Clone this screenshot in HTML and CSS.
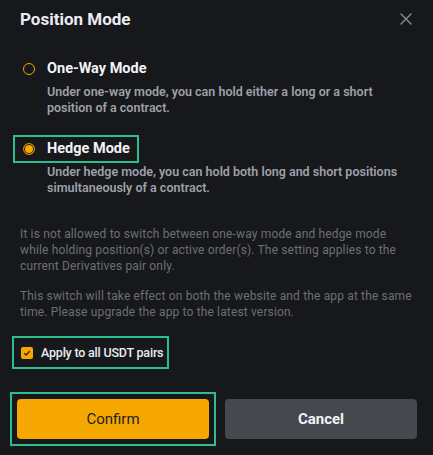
FILE: index.html
```html
<!DOCTYPE html>
<html lang="en">
<head>
  <meta charset="UTF-8">
  <meta name="viewport" content="width=device-width, initial-scale=1.0">
  <title>Position Mode</title>
  <link rel="stylesheet" href="styles.css">
</head>
<body>
  <div class="dialog">
    <div class="dialog-header">
      <h1>Position Mode</h1>
      <button class="close-button" aria-label="Close">
        <svg width="12" height="12" viewBox="0 0 12 12">
          <path d="M1 1 L11 11 M11 1 L1 11" stroke="#8a8d93" stroke-width="1.4" stroke-linecap="round" fill="none"/>
        </svg>
      </button>
    </div>

    <div class="options">
      <div class="option">
        <label class="option-head">
          <span class="radio"></span>
          <span class="option-title">One-Way Mode</span>
        </label>
        <p class="option-desc">Under one-way mode, you can hold either a long or a short position of a contract.</p>
      </div>
      <div class="option">
        <label class="option-head marked">
          <span class="radio checked"></span>
          <span class="option-title">Hedge Mode</span>
        </label>
        <p class="option-desc">Under hedge mode, you can hold both long and short positions simultaneously of a contract.</p>
      </div>
    </div>

    <div class="notes">
      <p>It is not allowed to switch between one-way mode and hedge mode while holding position(s) or active order(s). The setting applies to the current Derivatives pair only.</p>
      <p>This switch will take effect on both the website and the app at the same time. Please upgrade the app to the latest version.</p>
    </div>

    <label class="apply marked">
      <span class="checkbox">
        <svg width="8" height="8" viewBox="0 0 8 8">
          <path d="M1.2 4.2 L3.2 6 L6.8 2" stroke="#3a2a00" stroke-width="1.3" fill="none"/>
        </svg>
      </span>
      <span>Apply to all USDT pairs</span>
    </label>

    <div class="buttons">
      <div class="marked confirm-wrap">
        <button class="confirm">Confirm</button>
      </div>
      <button class="cancel">Cancel</button>
    </div>
  </div>
</body>
</html>
```

FILE: styles.css
```css
* {
  margin: 0;
  padding: 0;
  box-sizing: border-box;
}

body {
  font-family: Roboto, "Liberation Sans", sans-serif;
  background: #17181c;
  color: #eaecef;
}

.dialog {
  width: 433px;
  height: 455px;
  padding: 0 16px 0 20px;
}

.dialog-header {
  display: flex;
  align-items: center;
  justify-content: space-between;
  height: 38px;
}

.dialog-header h1 {
  font-size: 17px;
  font-weight: 700;
  color: #eaecef;
}

.close-button {
  background: none;
  border: none;
  width: 20px;
  height: 20px;
  display: flex;
  align-items: center;
  justify-content: center;
  margin-right: 1px;
  cursor: pointer;
}

.options {
  margin-top: 19px;
  margin-left: -5px;
  display: flex;
  flex-direction: column;
  gap: 21px;
}

.option-head {
  display: inline-flex;
  align-items: center;
  gap: 12px;
  padding: 2px 7px 2px 8px;
  height: 24px;
  cursor: pointer;
}

.option-title {
  font-size: 14.5px;
  font-weight: 700;
  line-height: 20px;
  color: #f2f3f5;
}

.radio {
  width: 12px;
  height: 12px;
  border-radius: 50%;
  border: 1.5px solid #f0a400;
}

.radio.checked {
  background: #f6a800;
  border: 1px solid #c98800;
  box-shadow: inset 0 0 0 1px #17181c;
}

.option-desc {
  margin: 3px 4px 0 32px;
  font-size: 12.5px;
  font-weight: 600;
  line-height: 16px;
  color: #9ea1a7;
}

.notes {
  margin-top: 30px;
}

.notes p {
  font-size: 12px;
  line-height: 16px;
  letter-spacing: 0.15px;
  color: #6c6f75;
}

.notes p + p {
  margin-top: 14px;
}

.marked {
  outline: 2px solid #2bbf8e;
}

.apply {
  display: inline-flex;
  align-items: center;
  gap: 8px;
  margin: 18px 0 0 -6px;
  padding: 7px 4px 7px 7px;
  font-size: 12.5px;
  font-weight: 500;
  letter-spacing: -0.2px;
  color: #eaecef;
  cursor: pointer;
}

.checkbox {
  width: 12px;
  height: 12px;
  border-radius: 2px;
  background: #f6a800;
  display: flex;
  align-items: center;
  justify-content: center;
}

.buttons {
  display: grid;
  grid-template-columns: 1fr 1fr;
  gap: 16px;
  margin: 32px 0 0 -3px;
}

.confirm-wrap {
  outline-offset: 5px;
}

.buttons button {
  width: 100%;
  height: 40px;
  border: none;
  border-radius: 4px;
  font-family: inherit;
  font-size: 15px;
  cursor: pointer;
}

.confirm {
  background: #f6a800;
  color: #1e2026;
  font-weight: 400;
}

.cancel {
  background: #45484e;
  color: #f2f3f5;
  font-weight: 700;
}
```
